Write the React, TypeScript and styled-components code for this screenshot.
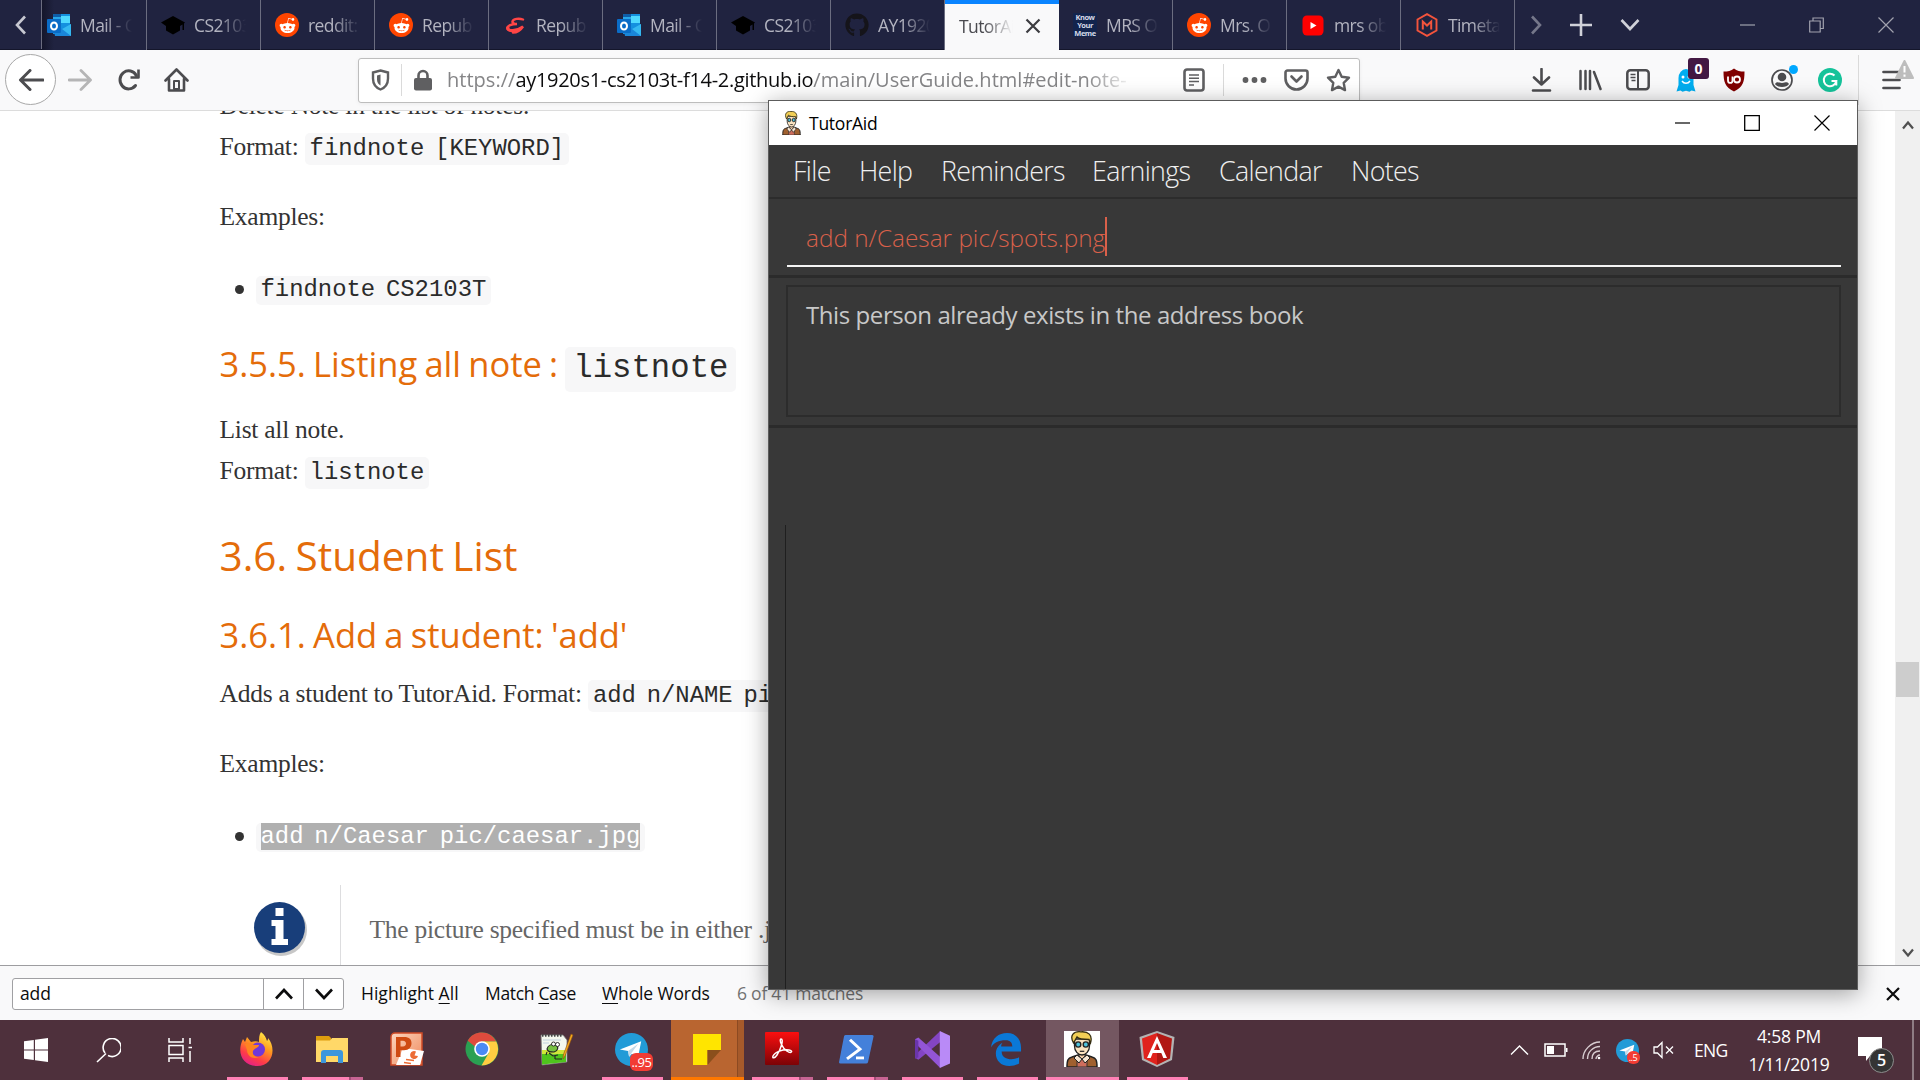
import React from 'react';
import styled, { createGlobalStyle, css } from 'styled-components';
import { FaRedditAlien, FaGithub } from 'react-icons/fa';

const ui = `"Open Sans", "Noto Sans", sans-serif`;
const serif = `"Liberation Serif", serif`;
const mono = `"Liberation Mono", monospace`;

const Global = createGlobalStyle`
  * { box-sizing: border-box; }
  html, body { margin: 0; padding: 0; overflow: hidden; background: #fff; }
  svg { display: block; flex: none; }
`;

const Desktop = styled.div`
  position: relative;
  width: 1920px;
  height: 1080px;
  overflow: hidden;
  display: flex;
  flex-direction: column;
  font-family: ${ui};
`;

/* ---------- tab strip ---------- */
const TabStrip = styled.div`
  height: 50px;
  flex: none;
  display: flex;
  background: #202340;
  border-bottom: 1px solid #14162b;
`;
const ScrollLeft = styled.div`
  width: 42px;
  flex: none;
  display: flex;
  align-items: center;
  justify-content: center;
  border-right: 1px solid #6b6d80;
`;
const Tab = styled.div<{ $active?: boolean; $first?: boolean }>`
  width: ${p => (p.$first ? 105 : 114)}px;
  height: 50px;
  flex: none;
  display: flex;
  align-items: center;
  gap: 9px;
  padding-left: ${p => (p.$first ? 5 : 14)}px;
  border-right: 1px solid #6b6d80;
  background: ${p => (p.$first ? 'linear-gradient(90deg, #14162b, #202340 12px)' : 'none')};
  ${p => p.$active && css`
    background: #f9f9fa;
    border-top: 4px solid #0a84ff;
    border-right: 0;
    padding-bottom: 3px;
    gap: 6px;
  `}
`;
const TabLabel = styled.span<{ $active?: boolean }>`
  width: ${p => (p.$active ? 60 : 58)}px;
  white-space: nowrap;
  font-size: 17.5px;
  line-height: 26px;
  letter-spacing: -0.6px;
  color: ${p => (p.$active ? '#4a4a4f' : '#b3b4c0')};
  mask-image: linear-gradient(90deg, #000 42%, transparent 90%);
`;
const StripTools = styled.div`
  flex: 1;
  display: flex;
  align-items: center;
  justify-content: space-between;
  padding: 0 26px 0 15px;
`;
const ToolGroup = styled.div<{ $gap: number }>`
  display: flex;
  align-items: center;
  gap: ${p => p.$gap}px;
`;

/* ---------- navigation bar ---------- */
const NavBar = styled.div`
  height: 61px;
  flex: none;
  display: flex;
  align-items: center;
  background: #f9f9fa;
  border-bottom: 1px solid #dcdcdc;
  color: #4c4c4f;
`;
const NavButtons = styled.div`
  width: 358px;
  display: flex;
  align-items: center;
  padding: 0 0 1px 5px;
`;
const BackButton = styled.div`
  width: 51px;
  height: 51px;
  margin-right: 12px;
  border: 1px solid #a8a8a8;
  border-radius: 50%;
  background: #fff;
  display: flex;
  align-items: center;
  justify-content: center;
`;
const Spaced = styled.div<{ $ml: number }>`
  margin-left: ${p => p.$ml}px;
`;
const UrlBar = styled.div`
  width: 1002px;
  height: 45px;
  display: flex;
  align-items: center;
  padding: 0 8px 0 12px;
  background: #fff;
  border: 1px solid #bdbdbd;
  border-radius: 3px;
  box-shadow: 0 1px 4px rgba(0, 0, 0, 0.06);
  color: #5f5f61;
`;
const Rule = styled.div<{ $h: number }>`
  width: 1px;
  height: ${p => p.$h}px;
  background: #dadada;
`;
const Url = styled.div`
  width: 694px;
  margin-left: 15px;
  white-space: nowrap;
  font-size: 20px;
  line-height: 30px;
  letter-spacing: 0.02px;
  color: #858587;
  mask-image: linear-gradient(90deg, #000 92%, transparent 99%);
  b { font-weight: 400; color: #0c0c0d; letter-spacing: -0.3px; }
`;
const Extensions = styled.div`
  flex: 1;
  display: flex;
  align-items: center;
  padding-left: 169px;
  gap: 24px;
`;
const IconWithBadge = styled.div`
  position: relative;
  width: 24px;
`;
const CountBadge = styled.span`
  position: absolute;
  left: 14px;
  top: -10px;
  width: 21px;
  height: 21px;
  border-radius: 3px;
  background: #431843;
  color: #fff;
  font: 700 14px/21px ${ui};
  text-align: center;
`;
const StatusDot = styled.span`
  position: absolute;
  left: 19px;
  top: -4px;
  width: 9px;
  height: 9px;
  border-radius: 50%;
  background: #00a8ff;
`;
const MenuArea = styled.div`
  height: 50px;
  display: flex;
  align-items: center;
  gap: 23px;
  margin-left: -8px;
`;
const Alert = styled.span`
  position: absolute;
  left: 13px;
  top: -10px;
`;

/* ---------- web page ---------- */
const Viewport = styled.div`
  height: 854px;
  flex: none;
  display: flex;
  overflow: hidden;
  background: #fff;
`;
const Article = styled.article`
  flex: 1;
  height: 854px;
  overflow: hidden;
  padding-left: 219.5px;
  color: #333;
`;
const Para = styled.p<{ $mt?: number }>`
  margin: ${p => p.$mt ?? 0}px 0 0;
  font: 25.5px/40.8px ${serif};
  letter-spacing: -0.255px;
  white-space: nowrap;
  height: 40.8px;
`;
const Code = styled.code<{ $big?: boolean }>`
  font-family: ${mono};
  font-size: ${p => (p.$big ? 32.3 : 23.9)}px;
  line-height: 1;
  letter-spacing: 0;
  word-spacing: -0.15em;
  color: #2b2b2b;
  background: #f7f7f8;
  border-radius: 5px;
  padding: ${p => (p.$big ? '3px 8px 5px' : '2px 5px 3px')};
`;
const Selected = styled.mark`
  background: #b0b0b0;
  color: #fff;
`;
const Heading = styled.h3<{ $mt: number; $level: 3 | 4 }>`
  margin: ${p => p.$mt}px 0 0;
  font: 400 ${p => (p.$level === 3 ? 40.5 : 34.5)}px/${p => (p.$level === 3 ? 56 : 48)}px "Open Sans", sans-serif;
  height: ${p => (p.$level === 3 ? 56 : 48)}px;
  letter-spacing: 0;
  word-spacing: -0.05em;
  white-space: nowrap;
  color: #e46c0a;
`;
const Item = styled.div<{ $mt: number }>`
  margin-top: ${p => p.$mt}px;
  margin-left: 15px;
  display: flex;
  align-items: center;
  height: 40.8px;
  gap: 12px;
  font: 25.5px/40.8px ${serif};
  &::before {
    content: '';
    width: 9px;
    height: 9px;
    margin-top: 3px;
    border-radius: 50%;
    background: #333;
  }
  ${Code} { margin-top: 4px; }
`;
const Note = styled.div`
  margin-top: 29px;
  display: flex;
  height: 90px;
`;
const NoteIcon = styled.div`
  width: 120.5px;
  padding: 16px 0 0 33px;
`;
const NoteText = styled.div`
  border-left: 1px solid #dddddf;
  padding: 25px 0 0 28.5px;
  font: 25.5px/40.8px ${serif};
  letter-spacing: -0.255px;
  white-space: nowrap;
  color: #666;
`;
const ScrollTrack = styled.div`
  width: 25px;
  flex: none;
  display: flex;
  flex-direction: column;
  align-items: center;
  background: #f0f0f0;
  padding: 9px 0 7px;
  justify-content: space-between;
`;
const Thumb = styled.div`
  width: 23px;
  height: 35px;
  margin-top: 280px;
  background: #cdcdcd;
`;

/* ---------- find bar ---------- */
const FindBar = styled.div`
  height: 55px;
  flex: none;
  display: flex;
  align-items: center;
  padding: 1px 20px 0 12px;
  background: #f9f9fa;
  border-top: 1px solid #9d9da0;
  font-size: 17.5px;
  color: #0c0c0d;
  white-space: nowrap;
`;
const FindField = styled.div`
  display: flex;
  width: 332px;
  height: 32px;
  border: 1px solid #a0a0a3;
  border-radius: 3px;
  background: #fff;
`;
const FindInput = styled.div`
  width: 251px;
  padding-left: 7px;
  line-height: 29px;
  letter-spacing: -0.1px;
`;
const FindStep = styled.div`
  width: 40px;
  border-left: 1px solid #a0a0a3;
  display: flex;
  align-items: center;
  justify-content: center;
`;
const FindOption = styled.span<{ $w: number; $ls: number; $muted?: boolean }>`
  width: ${p => p.$w}px;
  letter-spacing: ${p => p.$ls}px;
  color: ${p => (p.$muted ? '#737373' : 'inherit')};
  u { text-underline-offset: 3px; }
`;
const FindOptions = styled.div`
  flex: 1;
  display: flex;
  padding: 0 0 2px 17px;
`;

/* ---------- TutorAid window ---------- */
const Dialog = styled.div`
  position: absolute;
  left: 768px;
  top: 100px;
  width: 1090px;
  height: 890px;
  display: flex;
  flex-direction: column;
  border: 1px solid #5c5c5c;
  background: #383838;
  box-shadow: 0 4px 22px rgba(0, 0, 0, 0.36);
`;
const TitleBar = styled.div`
  height: 44px;
  flex: none;
  display: flex;
  align-items: center;
  padding: 0 27px 0 12px;
  background: #fff;
  font-size: 17.5px;
  color: #000;
`;
const Title = styled.span`
  flex: 1;
  margin-left: 7px;
  letter-spacing: -0.25px;
`;
const MenuBar = styled.div`
  height: 54px;
  flex: none;
  display: flex;
  padding-left: 24px;
  border-bottom: 2px solid #2c2c2c;
  font-weight: 300;
  font-size: 26.8px;
  line-height: 51px;
  color: #efefef;
`;
const MenuItem = styled.span<{ $w: number }>`
  width: ${p => p.$w}px;
  letter-spacing: -0.65px;
`;
const CommandArea = styled.div`
  height: 79px;
  flex: none;
  padding: 12px 16px 0 18px;
  border-bottom: 3px solid #2b2b2b;
`;
const CommandField = styled.div`
  height: 56px;
  display: flex;
  align-items: center;
  padding: 0 0 2px 19px;
  border-bottom: 2px solid #f4f4f4;
  font-weight: 300;
  font-size: 24.3px;
  letter-spacing: 0.03px;
  color: #d9604a;
`;
const Caret = styled.i`
  width: 2px;
  height: 39px;
  margin-top: -1px;
  background: #d9604a;
`;
const ResultArea = styled.div`
  height: 150px;
  flex: none;
  padding: 7px 16px 0 17px;
  border-bottom: 3px solid #2b2b2b;
`;
const ResultBox = styled.div`
  height: 132px;
  padding: 11px 18px;
  border: 2px solid #2c2c2c;
  font-size: 24px;
  line-height: 34px;
  letter-spacing: -0.42px;
  color: #c8c8c8;
`;
const ListPanel = styled.div`
  flex: 1;
  margin: 97px 0 0 16px;
  border-left: 1px solid #1f1f1f;
`;

/* ---------- taskbar ---------- */
const Taskbar = styled.div`
  height: 60px;
  flex: none;
  display: flex;
  background: #4e303c;
  color: #fff;
`;
const SystemButtons = styled.div`
  width: 221px;
  display: flex;
  align-items: center;
  gap: 47.5px;
  padding-left: 24px;
`;
const Task = styled.div<{ $tone?: 'orange' | 'light' }>`
  width: 73px;
  margin-right: 2px;
  height: 60px;
  display: flex;
  flex-direction: column;
  align-items: center;
  justify-content: space-between;
  background: ${p => (p.$tone === 'orange' ? 'linear-gradient(90deg, #b96530 66px, #8c4a22 66px, #8c4a22 67px, #a65a2b 67px)' : p.$tone === 'light' ? '#745761' : 'none')};
`;
const TaskIcon = styled.div`
  height: 57px;
  display: flex;
  align-items: center;
  justify-content: center;
  padding: 1px 2px 0 0;
`;
const Underline = styled.div<{ $kind?: 'one' | 'many' | 'wide' | 'orange' }>`
  height: 3px;
  width: ${p => (p.$kind === 'wide' || p.$kind === 'orange' ? 73 : 61)}px;
  background: ${p =>
    p.$kind === 'orange' ? '#ff7800'
      : p.$kind === 'many' ? 'linear-gradient(90deg, #ff80b5 47px, #a34d78 47px, #a34d78 49px, #c76493 49px)'
      : p.$kind ? '#ff80b5' : 'none'};
`;
const Tray = styled.div`
  flex: 1;
  display: flex;
  align-items: center;
  justify-content: flex-end;
  font-size: 17.5px;
`;
const Lang = styled.span`
  width: 53px;
  padding-left: 20px;
  letter-spacing: -0.7px;
`;
const Clock = styled.div`
  width: 84px;
  margin: 0 27px 0 20px;
  text-align: center;
  line-height: 28px;
  letter-spacing: -0.2px;
  white-space: nowrap;
`;
const ShowDesktop = styled.div`
  width: 8px;
  height: 60px;
  margin-left: 30px;
  border-left: 2px solid #8f7c84;
`;

/* ---------- icons ---------- */
type LineProps = { w: number; h: number; d: string; sw?: number; color?: string; fill?: string; cap?: 'round' | 'butt' };
const Line = ({ w, h, d, sw = 2, color = 'currentColor', fill = 'none', cap = 'butt' }: LineProps) => (
  <svg width={w} height={h} viewBox={`0 0 ${w} ${h}`}>
    <path d={d} stroke={color} strokeWidth={sw} fill={fill} strokeLinecap={cap} strokeLinejoin={cap === 'round' ? 'round' : 'miter'} />
  </svg>
);

const Outlook = () => (
  <svg width="24" height="24" viewBox="0 0 24 24">
    <rect x="6" y="1" width="17" height="20" fill="#1490df" />
    <rect x="6" y="1" width="8" height="3" fill="#0f5ea8" />
    <rect x="14" y="3" width="9" height="7" fill="#50d9ff" />
    <rect x="6" y="4" width="8" height="7" fill="#28a8ea" />
    <path d="M6 13l9 3 9-5v12H8z" fill="#1a86d9" />
    <path d="M15 16l9-5v12z" fill="#35b8f1" />
    <rect x="0" y="6" width="14" height="14" rx="1" fill="#0a6cc7" />
    <ellipse cx="7" cy="13" rx="3" ry="3.6" fill="none" stroke="#fff" strokeWidth="2" />
  </svg>
);
const GradCap = () => (
  <svg width="24" height="24" viewBox="0 0 24 24">
    <path d="M12 3l12 6.500-1 1V17h-1.500v-5.500L19 13v4.500l-7 4-7-4V13L0 9.500z" fill="#000" />
  </svg>
);
const RedditBall = styled.div`
  width: 24px;
  height: 24px;
  display: flex;
  align-items: center;
  justify-content: center;
  border-radius: 50%;
  background: #ff4500;
  color: #fff;
  font-size: 17px;
`;
const Reddit = () => <RedditBall><FaRedditAlien /></RedditBall>;
const Epsilon = () => (
  <svg width="24" height="24" viewBox="0 0 24 24">
    <path d="M20 6.500c-4-1.500-10-.8-10.500 2C9.200 10 11 11 14 11c-5 .2-9.500 1.600-9.800 4-.2 3.200 9.800 3.200 15.800-1.500-3 4.500-6 6-10 6" fill="none" stroke="#ff4545" strokeWidth="2.400" strokeLinecap="round" />
    <path d="M5 14.500c-1 4 7 4 12 1.500" fill="none" stroke="#ff4545" strokeWidth="3" strokeLinecap="round" />
  </svg>
);
const MemeBox = styled.div`
  width: 24px;
  height: 24px;
  background: #12244d;
  color: #d6dae8;
  font: 700 7.5px/8px ${ui};
  text-align: center;
  letter-spacing: -0.5px;
`;
const Meme = () => <MemeBox>Know<br />Your<br />Meme</MemeBox>;
const YouTube = () => (
  <svg width="24" height="24" viewBox="0 0 24 24">
    <rect x="1.500" y="2.500" width="21" height="20" rx="4.500" fill="#f00" />
    <path d="M9.500 9l6 3.500-6 3.500z" fill="#fff" />
  </svg>
);
const Hexagon = () => (
  <svg width="24" height="24" viewBox="0 0 24 24" fill="none" stroke="#f4543c">
    <path d="M12 1.200l9.500 5.300v11L12 22.800 2.500 17.500v-11z" strokeWidth="1.900" />
    <path d="M7.800 16.500V8.500l4.200 4 4.200-4v8" strokeWidth="2" />
  </svg>
);
const Student = ({ w, h }: { w: number; h: number }) => (
  <svg width={w} height={h} viewBox="0 0 36 36" preserveAspectRatio="none">
    <path d="M3 36c0-7 1-9 5-10l6-2h8l6 2c4 1 5 3 5 10z" fill="#a0602f" stroke="#222" strokeWidth="1.500" />
    <path d="M13 24l5 5 5-5v12H13z" fill="#cf6d5c" stroke="#333" strokeWidth="1" />
    <path d="M13 24l-3 3 5 5 3-4zM23 24l3 3-5 5-3-4z" fill="#f6e6d2" stroke="#222" strokeWidth="1" />
    <path d="M15 20h6v5l-3 3-3-3z" fill="#f1cda6" stroke="#333" strokeWidth="1" />
    <path d="M10.500 8h15v7c0 5-3.500 9-7.500 9s-7.500-4-7.500-9z" fill="#fbe3c0" stroke="#222" strokeWidth="1.300" />
    <path d="M9.500 12C5 4 10 0 17 .8c7-.6 12 3 9.500 11.200L25 8.500c-5 0-10 0-12-2.500z" fill="#f2cf56" stroke="#332c10" strokeWidth="1.300" />
    <circle cx="14.200" cy="13.500" r="2.600" fill="#4fc3dc" stroke="#222" strokeWidth="1.400" />
    <circle cx="21.800" cy="13.500" r="2.600" fill="#4fc3dc" stroke="#222" strokeWidth="1.400" />
    <path d="M15.800 20.300h4.500" stroke="#222" strokeWidth="1.200" />
  </svg>
);
const Shield = () => (
  <svg width="19" height="22" viewBox="0 0 19 22">
    <path d="M9.500 1.500l7.500 2v6c0 5-2.500 9-7.500 11C4.500 18.500 2 14.500 2 9.500v-6z" fill="none" stroke="currentColor" strokeWidth="2.400" />
    <path d="M9.500 5.500L6 6.500v4c0 3 1.500 5 3.500 6z" fill="currentColor" />
  </svg>
);
const Lock = () => (
  <svg width="18" height="22" viewBox="0 0 18 22">
    <path d="M4.500 10V6.500a4.500 4.500 0 0 1 9 0V10" fill="none" stroke="currentColor" strokeWidth="2.600" />
    <rect x="0" y="9" width="18" height="12.500" rx="2" fill="currentColor" />
  </svg>
);
const Reload = () => (
  <svg width="25" height="24" viewBox="0 0 25 24" fill="none" stroke="currentColor" strokeWidth="3">
    <path d="M18.500 17.500a8.700 9 0 1 1 .8-10" strokeLinecap="round" />
    <path d="M21.500 1.500v8h-8" strokeWidth="2.600" strokeLinejoin="round" />
  </svg>
);
const House = () => (
  <svg width="25" height="24" viewBox="0 0 25 24" fill="none" stroke="currentColor" strokeWidth="2.600" strokeLinecap="round" strokeLinejoin="round">
    <path d="M1.500 12.500l11-11 11 11M5 11v11.500h15V11" />
    <rect x="10" y="13" width="5" height="8" strokeWidth="2" />
  </svg>
);
const Reader = () => (
  <svg width="22" height="24" viewBox="0 0 22 24" fill="none" stroke="currentColor">
    <rect x="1.500" y="1.500" width="19" height="21" rx="2.500" strokeWidth="2.600" />
    <path d="M6 7h10M6 10.300h10M6 13.600h10M6 17h5" strokeWidth="1.500" />
  </svg>
);
const Dots = () => (
  <svg width="25" height="8" viewBox="0 0 25 8" fill="currentColor">
    <circle cx="3.500" cy="4" r="2.900" /><circle cx="12.500" cy="4" r="2.900" /><circle cx="21.500" cy="4" r="2.900" />
  </svg>
);
const Pocket = () => (
  <svg width="25" height="22" viewBox="0 0 25 22" fill="none" stroke="currentColor" strokeWidth="2.600" strokeLinecap="round" strokeLinejoin="round">
    <path d="M1.500 3.500a2 2 0 0 1 2-2h18a2 2 0 0 1 2 2v6a11 11 0 0 1-22 0z" />
    <path d="M7.500 7.500l5 5 5-5" />
  </svg>
);
const Star = () => (
  <svg width="25" height="24" viewBox="0 0 25 24">
    <path d="M12.500 2l3.200 6.700 7.300 1-5.300 5.100 1.300 7.300-6.500-3.500L6 22.100l1.300-7.300L2 9.700l7.300-1z" fill="none" stroke="currentColor" strokeWidth="2.400" strokeLinejoin="round" />
  </svg>
);
const Library = () => (
  <svg width="24" height="22" viewBox="0 0 24 22" stroke="currentColor" strokeWidth="2.500" strokeLinecap="round">
    <path d="M2.500 2v18M7.500 2v18M12 2v18M16 3l6.500 17" />
  </svg>
);
const Sidebar = () => (
  <svg width="24" height="22" viewBox="0 0 24 22" fill="none" stroke="currentColor">
    <rect x="1.300" y="1.300" width="21.400" height="19" rx="3" strokeWidth="2.500" />
    <path d="M12 1v19" strokeWidth="2" /><path d="M4.500 5.500h5M4.500 8.500h5M5.500 11.500h4" strokeWidth="1.300" />
  </svg>
);
const Ghost = () => (
  <svg width="24" height="24" viewBox="0 0 24 24">
    <path d="M4.500 10a7.500 9 0 0 1 15 0v7l2 6.500-4-1-2 1.300-3.500-1-3.500 1-2-1.300-4 1 2-6.500z" fill="#00aef0" />
    <circle cx="9" cy="9" r="1.500" fill="#fff" /><circle cx="15" cy="9" r="1.500" fill="#fff" />
    <path d="M8 13c2 3 6 3 8 0" fill="none" stroke="#fff" strokeWidth="1.400" />
  </svg>
);
const UBlock = () => (
  <svg width="24" height="24" viewBox="0 0 24 24">
    <path d="M12 .5c3 2.500 6 3 10.500 3C22.500 14 21 19 12 23.500 3 19 1.500 14 1.500 3.500 6 3.500 9 3 12 .5z" fill="#800000" />
    <path d="M6 8.500v4a2 2.200 0 0 0 4.500 0v-4" fill="none" stroke="#fff" strokeWidth="1.800" />
    <circle cx="15" cy="11.500" r="3" fill="none" stroke="#fff" strokeWidth="1.800" />
  </svg>
);
const Account = () => (
  <svg width="24" height="22" viewBox="0 0 24 22">
    <circle cx="12" cy="11" r="10" fill="none" stroke="currentColor" strokeWidth="1.700" />
    <circle cx="12" cy="8" r="4.300" fill="currentColor" />
    <path d="M5 15c2.500-3 3.500-1 7-1s4.500-2 7 1c-2 4-12 4-14 0z" fill="currentColor" />
  </svg>
);
const Grammarly = () => (
  <svg width="24" height="24" viewBox="0 0 24 24">
    <circle cx="12" cy="12" r="12" fill="#15c39a" />
    <path d="M16.500 7.500a6.300 6.300 0 1 0 1.800 5.500h-4.800M18.300 12.500v5" fill="none" stroke="#fff" strokeWidth="2" />
  </svg>
);
const Warning = () => (
  <svg width="19" height="22" viewBox="0 0 19 22">
    <path d="M9.500 1L18 18H1z" fill="#bdbdbd" stroke="#bdbdbd" strokeWidth="2" strokeLinejoin="round" />
    <path d="M9.500 6v6.500M9.500 14.500v2.200" stroke="#fff" strokeWidth="2" />
  </svg>
);
const Info = () => (
  <svg width="56" height="56" viewBox="0 0 56 56">
    <ellipse cx="28" cy="29" rx="26" ry="26" fill="#000" opacity=".22" />
    <circle cx="26.500" cy="26.500" r="25.500" fill="#183e7a" />
    <path d="M22.500 7h8v8h-8zM18.500 19h12v19H35v6H18.500v-6h4V25h-4z" fill="#fff" />
  </svg>
);

const Windows = () => (
  <svg width="24" height="24" viewBox="0 0 24 24" fill="#fff">
    <path d="M0 3.300l9.800-1.400v9.500H0zM11 1.700L24 0v11.400H11zM0 12.600h9.800v9.500L0 20.700zM11 12.600h13V24l-13-1.700z" />
  </svg>
);
const TaskView = () => <Line w={24} h={24} sw={1.5} color="#fff" d="M1 0v4h14V0M1 7.500h14v9H1zM1 24v-4h14v4M22 0v6M22 13v11M20.500 9.500h3.500" />;
const Firefox = () => (
  <svg width="36" height="36" viewBox="0 0 36 36">
    <defs>
      <linearGradient id="fx" x1=".8" y1="0" x2=".3" y2="1">
        <stop offset="0" stopColor="#fff04a" /><stop offset=".4" stopColor="#ff9a1f" /><stop offset=".75" stopColor="#ff3b48" /><stop offset="1" stopColor="#e3208b" />
      </linearGradient>
    </defs>
    <path d="M22 1c4 3 5 6 6 9 1-1 1-2 1-3 8 9 6 28-11 28C4 35-3 22 4 8l2 3 2-5 4 5c3-1 6-1 8 0 0-4 0-7 2-10z" fill="url(#fx)" />
    <circle cx="19" cy="18.500" r="7" fill="#7138d8" />
    <path d="M6 13c4-1 6-1 9 1h5c0 3-5 3-6 6-1 4 2 6 6 6-6 3-12-1-12-7z" fill="#ff8420" />
  </svg>
);
const Explorer = () => (
  <svg width="34" height="34" viewBox="0 0 34 34">
    <path d="M1 4h13l2 2v4H1z" fill="#dd9d0d" />
    <path d="M1 8.500h14l2-2.500h16v24H1z" fill="#ffd868" />
    <path d="M6 31V21a3 3 0 0 1 3-3h16a3 3 0 0 1 3 3v10h-5v-7H11v7z" fill="#3c97dd" />
  </svg>
);
const PowerPoint = () => (
  <svg width="36" height="36" viewBox="0 0 36 36">
    <defs><linearGradient id="pp" x2="1" y2="1"><stop stopColor="#fbd5bf" /><stop offset="1" stopColor="#f08a5c" /></linearGradient></defs>
    <path d="M2 6a4 4 0 0 1 4-4h27v32H2z" fill="url(#pp)" stroke="#cf4a26" strokeWidth="1.500" />
    <path d="M14 17l21 3-4 14H7z" fill="#fff" />
    <path d="M7 6h8c5.500 0 7.500 2.500 7.500 6.200s-2.500 7-7.500 7h-3.500V26H7zm4.500 3.800v5.700H14c4 0 4-5.700 0-5.700z" fill="#cf4a12" fillRule="evenodd" />
    <path d="M27 20.500a4 4 0 1 0 2 4.500l-3.500-.5z" fill="#ec6c35" />
    <path d="M17 28.500l8 1M15 31.500l7 1" stroke="#ec6c35" strokeWidth="1.300" />
  </svg>
);
const Chrome = () => (
  <svg width="34" height="34" viewBox="0 0 34 34">
    <circle cx="17" cy="17" r="16.500" fill="#2aa052" />
    <path d="M17 17h-4L2.700 8.700C6 3 11 .5 17 .5s11 3 14.300 9H17z" fill="#de4b3d" />
    <path d="M31.300 9.500H18l6 11-7.500 13A16.500 16.500 0 0 0 31.300 9.500z" fill="#ffcd42" />
    <circle cx="17" cy="17" r="7.800" fill="#fff" /><circle cx="17" cy="17" r="6.200" fill="#4a8af4" />
  </svg>
);
const NotepadPlus = () => (
  <svg width="36" height="36" viewBox="0 0 36 36">
    <path d="M2 4h22l4 5v22L3 34z" fill="#f4f8ee" stroke="#777" strokeWidth=".8" />
    <path d="M3 22h24v9L3 33.500z" fill="#4fc41d" /><path d="M3 19h24v4H3z" fill="#cfe73a" />
    <path d="M3 4.500h21" stroke="#444" strokeWidth="2.500" strokeDasharray="1.500 1.500" />
    <path d="M4 9h18M4 12h6" stroke="#b5c8dc" strokeWidth=".8" />
    <path d="M8 18c1-4 5-5 9-4 3 2 2 6-2 7-4 0-6 0-7-3zM10 22l4 3 5-1M8 21l-1 3" fill="#76c142" stroke="#222" strokeWidth="1.100" />
    <circle cx="14.500" cy="13" r="2" fill="#fff" stroke="#222" strokeWidth=".9" /><circle cx="18.500" cy="13.500" r="2" fill="#fff" stroke="#222" strokeWidth=".9" />
    <path d="M16 28v-3M16 28h7" stroke="#222" strokeWidth="1.200" />
    <path d="M34 4l-8 21-2 3 .3-4L32 3z" fill="#f5a91c" stroke="#8b4b12" strokeWidth=".6" />
  </svg>
);
const Plane = ({ s }: { s: number }) => (
  <svg width={s} height={s} viewBox="0 0 34 34">
    <circle cx="17" cy="17" r="17" fill="#229bd7" />
    <path d="M5 17L27 8.500 23.500 26l-6-4.500-3 3-1-6z" fill="#fff" />
    <path d="M13.500 18.500L24 11l-7 9.500-2.500 4z" fill="#c3d9e8" />
  </svg>
);
const TelegramBox = styled.div<{ $s: number }>`
  position: relative;
  width: ${p => p.$s}px;
  height: ${p => p.$s}px;
`;
const RedCount = styled.span<{ $small?: boolean }>`
  position: absolute;
  right: ${p => (p.$small ? -1 : -5)}px;
  bottom: ${p => (p.$small ? -2 : -5)}px;
  min-width: ${p => (p.$small ? 13 : 23)}px;
  height: ${p => (p.$small ? 13 : 18)}px;
  border-radius: 6px;
  background: #f23c34;
  color: #fff;
  font: 400 ${p => (p.$small ? 9 : 13)}px/${p => (p.$small ? 13 : 18)}px ${ui};
  letter-spacing: -0.4px;
  text-align: center;
`;
const Telegram = () => <TelegramBox $s={33}><Plane s={33} /><RedCount>..95</RedCount></TelegramBox>;
const Sticky = () => (
  <svg width="28" height="31" viewBox="0 0 28 31">
    <path d="M0 0h28v16H14.500v15H0z" fill="#ffe500" />
    <path d="M14.500 31V16H28z" fill="#8a4f1c" />
  </svg>
);
const Acrobat = () => (
  <svg width="34" height="38" viewBox="0 0 34 38">
    <defs><linearGradient id="ac" x2="0" y2="1"><stop stopColor="#fb0f0f" /><stop offset="1" stopColor="#7c0206" /></linearGradient></defs>
    <rect x="0" y="2" width="34" height="33" rx="1" fill="url(#ac)" />
    <path d="M16 9c3 0 0 10-4 16-2 3-5 4-4 1 2-4 10-7 16-6 5 1 2 4-2 1-5-3-8-11-6-12z" fill="none" stroke="#fff" strokeWidth="1.500" />
  </svg>
);
const PowerShell = () => (
  <svg width="35" height="29" viewBox="0 0 35 31" preserveAspectRatio="none">
    <path d="M7 0h26a1.500 1.500 0 0 1 1.500 2L29 29a2 2 0 0 1-2 1.500H1.500A1.500 1.500 0 0 1 0 29L5 1.500A2 2 0 0 1 7 0z" fill="#4480da" />
    <path d="M11 5l10 10L8 25.500" fill="none" stroke="#fff" strokeWidth="3" /><path d="M17 24.500h8" stroke="#fff" strokeWidth="3" />
  </svg>
);
const VisualStudio = () => (
  <svg width="36" height="37" viewBox="0 0 37 40" preserveAspectRatio="none">
    <path d="M1 29l3.500 2L27 12V0L1 26z" fill="#8445c4" />
    <path d="M1 9l3.500-2L27 28v12L1 13z" fill="#9355d6" />
    <path d="M1 9v21l3.500-1.500v-18z" fill="#6a35ab" />
    <path d="M26.500 0L37 5v30l-10.500 5z" fill="#b98af7" />
  </svg>
);
const Edge = () => (
  <svg width="31" height="33" viewBox="0 0 32 34" preserveAspectRatio="none">
    <path d="M0 15C1 5 8 0 16.500 0 26 0 31 7 31 15v4H11c0 6 5 8 10 8 3 0 6-1 8-2v6.500c-3 1.500-6 2.500-10 2.500C10 34 5 28 5 21c0-5 3-9 7-11-1 1-1.500 2.500-1.500 4H22c0-4-2-6.500-7-6.500C8 7.500 3 10 0 15z" fill="#0a78d7" />
  </svg>
);
const Portrait = styled.div`
  background: #fff;
  width: 36px;
  height: 36px;
`;
const Angular = () => (
  <svg width="36" height="36" viewBox="0 0 36 36">
    <path d="M18 0l17.500 6-2.500 23L18 36 3 29 .5 6z" fill="#b3b3b3" />
    <path d="M18 2L33 7.500 31 27.500 18 34z" fill="#b11713" /><path d="M18 2L3 7.500 5 27.500 18 34z" fill="#e0231d" />
    <path d="M18 5L8 27h3.700l2-5h8.600l2 5H28zm0 7l3 7h-6z" fill="#fff" fillRule="evenodd" />
  </svg>
);
const Battery = () => (
  <svg width="24" height="14" viewBox="0 0 24 14">
    <rect x="1" y="1" width="20" height="12" fill="none" stroke="#fff" strokeWidth="1.500" /><rect x="3" y="3" width="7" height="8" fill="#fff" /><rect x="22" y="5" width="1.500" height="4" fill="#fff" />
  </svg>
);
const Wifi = () => (
  <svg width="19" height="19" viewBox="0 0 19 19" fill="none" stroke="#d8cdd1" strokeWidth="1.400">
    <path d="M1 18C1 9 9 1 18 1M5.500 18C5.500 11 11 5.500 18 5.500M10 18c0-5 3-8 8-8M14 18c0-2 2-4 4-4" /><circle cx="17" cy="17" r="1.300" fill="#fff" stroke="none" />
  </svg>
);
const Notifications = styled.div`
  position: relative;
  width: 24px;
  height: 24px;
  margin-bottom: 3px;
`;
const NotifyCount = styled.span`
  position: absolute;
  left: 11px;
  top: 11px;
  width: 25px;
  height: 25px;
  border: 1px solid #8d8d8d;
  border-radius: 50%;
  background: #343434;
  font: 600 16px/22px ${ui};
  text-align: center;
`;

const tabs: { label: string; icon?: React.ReactNode; active?: boolean }[] = [
  { label: 'Mail - C', icon: <Outlook /> },
  { label: 'CS2103', icon: <GradCap /> },
  { label: 'reddit: ', icon: <Reddit /> },
  { label: 'Repub', icon: <Reddit /> },
  { label: 'Repub', icon: <Epsilon /> },
  { label: 'Mail - C', icon: <Outlook /> },
  { label: 'CS2103', icon: <GradCap /> },
  { label: 'AY1920', icon: <FaGithub size={24} color="#15141a" /> },
  { label: 'TutorAi', active: true },
  { label: 'MRS O', icon: <Meme /> },
  { label: 'Mrs. O', icon: <Reddit /> },
  { label: 'mrs ob', icon: <YouTube /> },
  { label: 'Timeta', icon: <Hexagon /> },
];

const menus: [string, number][] = [['File', 66], ['Help', 82], ['Reminders', 151], ['Earnings', 127], ['Calendar', 132], ['Notes', 80]];

type TaskEntry = { icon: React.ReactNode; kind?: 'one' | 'many' | 'wide' | 'orange'; tone?: 'orange' | 'light' };
const tasks: TaskEntry[] = [
  { icon: <Firefox />, kind: 'one' },
  { icon: <Explorer />, kind: 'many' },
  { icon: <PowerPoint /> },
  { icon: <Chrome /> },
  { icon: <NotepadPlus /> },
  { icon: <Telegram />, kind: 'one' },
  { icon: <Sticky />, kind: 'orange', tone: 'orange' },
  { icon: <Acrobat />, kind: 'many' },
  { icon: <PowerShell />, kind: 'many' },
  { icon: <VisualStudio />, kind: 'one' },
  { icon: <Edge />, kind: 'one' },
  { icon: <Portrait><Student w={36} h={36} /></Portrait>, kind: 'wide', tone: 'light' },
  { icon: <Angular />, kind: 'one' },
];

export default function App() {
  return (
    <Desktop>
      <Global />
      <TabStrip>
        <ScrollLeft><Line w={12} h={20} d="M10 1.500L2 10l8 8.500" sw={2.6} color="#c7c8d1" /></ScrollLeft>
        {tabs.map((t, i) => (
          <Tab key={i} $active={t.active} $first={i === 0}>
            {t.icon}
            <TabLabel $active={t.active}>{t.label}</TabLabel>
            {t.active && <Line w={16} h={16} d="M1.500 1.500l13 13M14.500 1.500l-13 13" sw={2.2} color="#3c3c40" />}
          </Tab>
        ))}
        <StripTools>
          <ToolGroup $gap={28}>
            <Line w={12} h={20} d="M2 1.500l8 8.500-8 8.500" sw={2.6} color="#75778a" />
            <Line w={22} h={22} d="M11 0v22M0 11h22" sw={2.6} color="#d0d1d9" />
            <Line w={20} h={14} d="M1.500 2l8.500 9 8.500-9" sw={2.6} color="#d0d1d9" />
          </ToolGroup>
          <ToolGroup $gap={54}>
            <Line w={15} h={2} d="M0 1h15" sw={1.2} color="#a1a2ae" />
            <Line w={15} h={16} d="M.7 4h10.500v11H.7zM4 4V1h10.300v10.500h-3" sw={1.2} color="#a1a2ae" />
            <Line w={16} h={16} d="M.5.5l15 15M15.500.5l-15 15" sw={1.2} color="#a1a2ae" />
          </ToolGroup>
        </StripTools>
      </TabStrip>

      <NavBar>
        <NavButtons>
          <BackButton><Line w={26} h={22} d="M25 11H3M12 1.500L2.500 11l9.500 9.500" sw={3} cap="round" /></BackButton>
          <Line w={25} h={22} d="M1 11h21M13 1.500L22.500 11 13 20.500" sw={2.8} cap="round" color="#b5b5b6" />
          <Spaced $ml={24}><Reload /></Spaced>
          <Spaced $ml={22}><House /></Spaced>
        </NavButtons>
        <UrlBar>
          <Shield />
          <Spaced $ml={11}><Rule $h={32} /></Spaced>
          <Spaced $ml={12}><Lock /></Spaced>
          <Url>https://<b>ay1920s1-cs2103t-f14-2.github.io</b>/main/UserGuide.html#edit-note-</Url>
          <Spaced $ml={42}><Reader /></Spaced>
          <Spaced $ml={18}><Rule $h={32} /></Spaced>
          <Spaced $ml={18}><Dots /></Spaced>
          <Spaced $ml={17}><Pocket /></Spaced>
          <Spaced $ml={17}><Star /></Spaced>
        </UrlBar>
        <Extensions>
          <Line w={25} h={24} d="M12.500 1v15M5 9.500l7.500 7 7.500-7M4 22.500h17" sw={2.6} cap="round" />
          <Library />
          <Sidebar />
          <IconWithBadge><Ghost /><CountBadge>0</CountBadge></IconWithBadge>
          <UBlock />
          <IconWithBadge><Account /><StatusDot /></IconWithBadge>
          <Grammarly />
          <MenuArea>
            <Rule $h={50} />
            <IconWithBadge>
              <Line w={19} h={20} d="M1.500 2h16M1.500 10h16M1.500 18h16" sw={2.7} cap="round" />
              <Alert><Warning /></Alert>
            </IconWithBadge>
          </MenuArea>
        </Extensions>
      </NavBar>

      <Viewport>
        <Article>
          <Para $mt={-25}>Delete Note in the list of notes.</Para>
          <Para>Format: <Code>findnote [KEYWORD]</Code></Para>
          <Para $mt={29.5}>Examples:</Para>
          <Item $mt={30}><Code>findnote CS2103T</Code></Item>
          <Heading $level={4} $mt={31}>3.5.5. Listing all note : <Code $big>listnote</Code></Heading>
          <Para $mt={22.4}>List all note.</Para>
          <Para>Format: <Code>listnote</Code></Para>
          <Heading $level={3} $mt={36.4}>3.6. Student List</Heading>
          <Heading $level={4} $mt={27.3}>3.6.1. Add a student: 'add'</Heading>
          <Para $mt={14.7}>Adds a student to TutorAid. Format: <Code>add n/NAME pic/PICTURE</Code></Para>
          <Para $mt={29.2}>Examples:</Para>
          <Item $mt={30}><Code><Selected>add n/Caesar pic/caesar.jpg</Selected></Code></Item>
          <Note>
            <NoteIcon><Info /></NoteIcon>
            <NoteText>The picture specified must be in either .jpg or .png format</NoteText>
          </Note>
        </Article>
        <ScrollTrack>
          <Line w={14} h={10} d="M2 8.500l5-6 5 6" sw={2.2} color="#505050" />
          <Thumb />
          <Line w={14} h={10} d="M2 1.500l5 6 5-6" sw={2.2} color="#505050" />
        </ScrollTrack>
      </Viewport>

      <FindBar>
        <FindField>
          <FindInput>add</FindInput>
          <FindStep><Line w={20} h={12} d="M2 10.500L10 2l8 8.500" sw={2.6} /></FindStep>
          <FindStep><Line w={20} h={12} d="M2 1.500L10 10l8-8.500" sw={2.6} /></FindStep>
        </FindField>
        <FindOptions>
          <FindOption $w={124} $ls={0.02}>Highlight <u>A</u>ll</FindOption>
          <FindOption $w={117} $ls={-0.33}>Match <u>C</u>ase</FindOption>
          <FindOption $w={135} $ls={-0.13}><u>W</u>hole Words</FindOption>
          <FindOption $w={140} $ls={-0.23} $muted>6 of 41 matches</FindOption>
        </FindOptions>
        <Line w={14} h={14} d="M1 1l12 12M13 1L1 13" sw={2.2} />
      </FindBar>

      <Taskbar>
        <SystemButtons>
          <Windows />
          <Line w={25} h={25} d="M9 15a9 9 0 1 1 3 2.500M10 15.500L1 24" sw={1.6} color="#fff" />
          <TaskView />
        </SystemButtons>
        {tasks.map((t, i) => (
          <Task key={i} $tone={t.tone}>
            <TaskIcon>{t.icon}</TaskIcon>
            <Underline $kind={t.kind} />
          </Task>
        ))}
        <Tray>
          <ToolGroup $gap={14.5}>
            <Line w={19} h={10} d="M1 9.500L9.500 1 18 9.500" sw={1.4} color="#fff" />
            <Battery />
            <Wifi />
            <TelegramBox $s={23}><Plane s={23} /><RedCount $small>..5</RedCount></TelegramBox>
            <Line w={21} h={18} d="M1 6h3.500L9 1.500v15L4.500 12H1zM13 5.500l7 7M20 5.500l-7 7" sw={1.3} color="#fff" />
          </ToolGroup>
          <Lang>ENG</Lang>
          <Clock>4:58 PM<br />1/11/2019</Clock>
          <Notifications>
            <Line w={24} h={24} d="M0 0h24v19H12l-4 5v-5H0z" sw={0} fill="#fff" />
            <NotifyCount>5</NotifyCount>
          </Notifications>
          <ShowDesktop />
        </Tray>
      </Taskbar>

      <Dialog>
        <TitleBar>
          <Student w={21} h={24} />
          <Title>TutorAid</Title>
          <ToolGroup $gap={54}>
            <Line w={15} h={2} d="M0 1h15" sw={1.2} />
            <Line w={16} h={16} d="M.7.7h14.600v14.600H.7z" sw={1.3} />
            <Line w={16} h={16} d="M.5.5l15 15M15.500.5l-15 15" sw={1.2} />
          </ToolGroup>
        </TitleBar>
        <MenuBar>{menus.map(([m, w]) => <MenuItem key={m} $w={w}>{m}</MenuItem>)}</MenuBar>
        <CommandArea>
          <CommandField>add n/Caesar pic/spots.png<Caret /></CommandField>
        </CommandArea>
        <ResultArea>
          <ResultBox>This person already exists in the address book</ResultBox>
        </ResultArea>
        <ListPanel />
      </Dialog>
    </Desktop>
  );
}
